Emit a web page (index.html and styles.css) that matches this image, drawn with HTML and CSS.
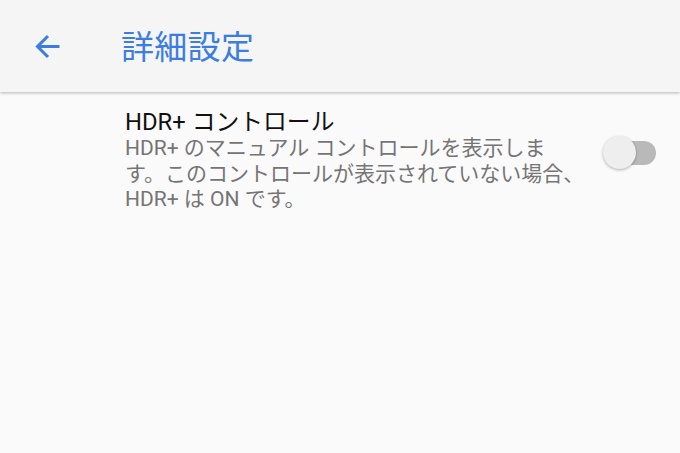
FILE: index.html
```html
<!DOCTYPE html>
<html lang="ja">
<head>
<meta charset="utf-8">
<link rel="stylesheet" href="styles.css">
</head>
<body>
<header class="appbar">
  <div class="back">
    <svg width="26" height="25" viewBox="0 0 26 25"><path d="M25.5 12.5H4 M14 2 L3.5 12.5 L14 23" fill="none" stroke="#3b7de0" stroke-width="3"/></svg>
  </div>
  <div class="title">詳細設定</div>
</header>
<main class="list">
  <div class="item">
    <div class="text">
      <div class="item-title">HDR+ コントロール</div>
      <div class="item-summary">HDR+ のマニュアル コントロールを表示しま<br>す。このコントロールが表示されていない場合、HDR+ は ON です。</div>
    </div>
    <div class="switch">
      <div class="track"></div>
      <div class="thumb"></div>
    </div>
  </div>
</main>
</body>
</html>
```

FILE: styles.css
```css
html, body {
  margin: 0;
  padding: 0;
  width: 680px;
  height: 453px;
  overflow: hidden;
  background: #fafafa;
  font-family: Roboto, "Noto Sans CJK JP", sans-serif;
}
.appbar {
  height: 92px;
  background: #f5f5f5;
  display: flex;
  align-items: center;
  box-shadow: 0 1px 3px rgba(0,0,0,0.28);
  position: relative;
}
.back {
  width: 26px;
  height: 25px;
  margin-left: 34px;
  display: flex;
}
.title {
  margin-left: 61px;
  font-size: 33px;
  color: #3b7de0;
  letter-spacing: 0.3px;
  margin-top: -2px;
}
.item {
  display: flex;
  align-items: flex-start;
  padding: 16px 0 0 125px;
}
.text {
  width: 462px;
}
.item-title {
  font-size: 23.8px;
  color: #111;
  line-height: 28px;
}
.item-summary {
  font-size: 21px;
  color: #757575;
  line-height: 25.5px;
}
.switch {
  position: relative;
  width: 54px;
  height: 34px;
  margin-left: 16px;
  margin-top: 28px;
}
.track {
  position: absolute;
  left: 16px;
  top: 5px;
  width: 37px;
  height: 24px;
  border-radius: 12px;
  background: #b9b9b9;
}
.thumb {
  position: absolute;
  left: 0;
  top: 0;
  width: 33px;
  height: 33px;
  border-radius: 50%;
  background: #eeeeee;
  box-shadow: 0 1px 3px rgba(0,0,0,0.3);
}
```
